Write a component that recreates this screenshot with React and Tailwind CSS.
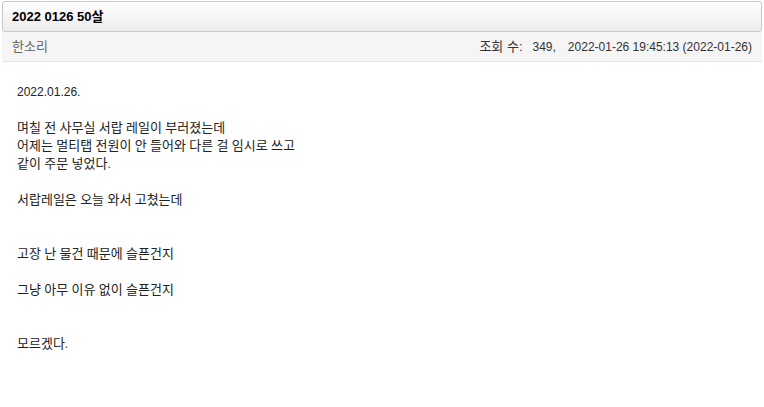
import React from 'react';

const body = [
    '2022.01.26.',
    '',
    '며칠 전 사무실 서랍 레일이 부러졌는데',
    '어제는 멀티탭 전원이 안 들어와 다른 걸 임시로 쓰고',
    '같이 주문 넣었다.',
    '',
    '서랍레일은 오늘 와서 고쳤는데',
    '',
    '',
    '고장 난 물건 때문에 슬픈건지',
    '',
    '그냥 아무 이유 없이 슬픈건지',
    '',
    '',
    '모르겠다.',
];

// hangul runs get a slightly bigger size so they match the wider Korean glyphs
function Line({ text }) {
    if (!text) return <div className="h-[18px]" />;
    const parts = text.split(/([\uAC00-\uD7A3]+)/);
    return (
        <div className="h-[18px] whitespace-pre">
            {parts.map((p, i) =>
                /[\uAC00-\uD7A3]/.test(p)
                    ? <span key={i} className="text-[13px]">{p}</span>
                    : <span key={i}>{p}</span>
            )}
        </div>
    );
}

function App() {
    return (
        <div className="w-[764px] h-[407px] bg-white px-[2px] pt-[1px] font-['Liberation_Sans','Noto_Sans_CJK_KR',sans-serif]">
            <div className="h-[31px] flex items-center px-[9px] rounded-[3px] border border-[#c8c8c8] bg-gradient-to-b from-white to-[#ececec]">
                <h1 className="text-[13px] font-bold text-black leading-none">2022 0126 50살</h1>
            </div>
            <div className="h-[30px] flex items-center justify-between px-[10px] bg-[#f5f5f5] border-b border-[#e4e4e4] text-[12px] leading-[18px]">
                <span className="text-[#666] text-[13px]">한소리</span>
                <div className="flex items-center text-[#333]">
                    <span className="text-[13px]">조회 수:</span>
                    <span className="ml-[10px]">349,</span>
                    <span className="ml-[12px]">2022-01-26 19:45:13 (2022-01-26)</span>
                </div>
            </div>
            <div className="px-[15px] pt-[21px] text-[12px] leading-[18px] text-[#222]">
                {body.map((t, i) => <Line key={i} text={t} />)}
            </div>
        </div>
    );
}

export default App;
